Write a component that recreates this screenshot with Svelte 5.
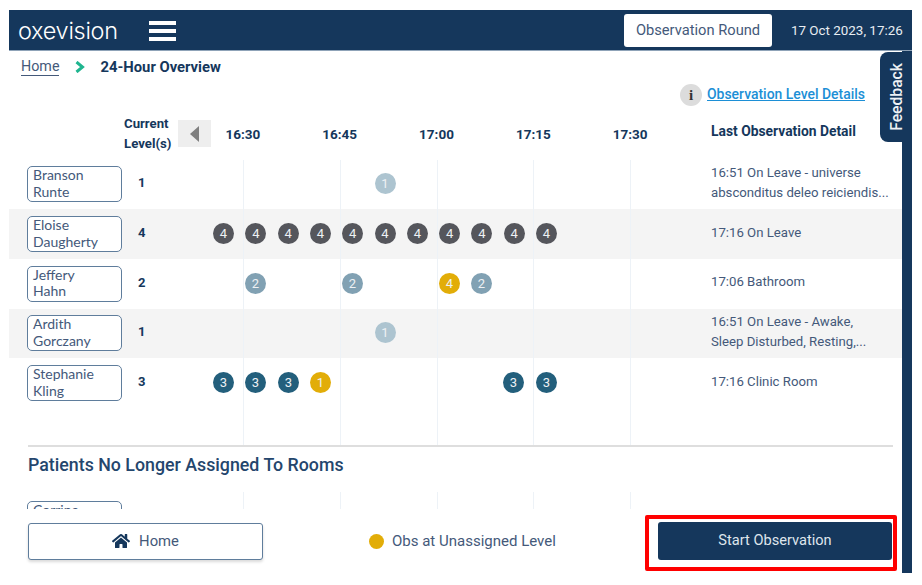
<script lang="ts">
  const times = ['16:30', '16:45', '17:00', '17:15', '17:30'];

  // x is the dot's offset in the timeline, in px
  const patients = [
    { first: 'Branson', last: 'Runte', level: 1, detail: ['16:51 On Leave - universe', 'absconditus deleo reiciendis...'],
      dots: [{ x: 161.500, l: 'l1' }] },
    { first: 'Eloise', last: 'Daugherty', level: 4, detail: ['17:16 On Leave'],
      dots: [0, 32.3, 64.6, 96.9, 129.2, 161.5, 193.8, 226.1, 258.4, 290.7, 323].map((x) => ({ x, l: 'l4' })) },
    { first: 'Jeffery', last: 'Hahn', level: 2, detail: ['17:06 Bathroom'],
      dots: [{ x: 32, l: 'l2' }, { x: 129, l: 'l2' }, { x: 226, l: 'lu', n: 4 }, { x: 258, l: 'l2' }] },
    { first: 'Ardith', last: 'Gorczany', level: 1, detail: ['16:51 On Leave - Awake,', 'Sleep Disturbed, Resting,...'],
      dots: [{ x: 161.500, l: 'l1' }] },
    { first: 'Stephanie', last: 'Kling', level: 3, detail: ['17:16 Clinic Room'],
      dots: [{ x: 0, l: 'l3' }, { x: 32, l: 'l3' }, { x: 65, l: 'l3' }, { x: 97, l: 'lu', n: 1 }, { x: 290, l: 'l3' }, { x: 323, l: 'l3' }] }
  ];

  function dotNum(dot: any) {
    return dot.n ?? Number(dot.l.slice(1));
  }
</script>

<div class="page">
  <header class="topbar">
    <div class="logo">oxevision</div>
    <div class="burger"><span></span><span></span><span></span></div>
    <div class="spacer"></div>
    <button class="round">Observation Round</button>
    <div class="clock">17 Oct 2023, 17:26</div>
  </header>

  <div class="body">
    <main class="content">
      <nav class="crumbs">
        <a href="#home">Home</a>
        <svg width="10" height="12" viewBox="0 0 10 12"><path d="M1.5 1 L7.5 6 L1.5 11" fill="none" stroke="#1fb58f" stroke-width="3"/></svg>
        <strong>24-Hour Overview</strong>
      </nav>

      <div class="legend-link">
        <span class="info">i</span>
        <a href="#levels">Observation Level Details</a>
      </div>

      <div class="scroller">
        <div class="gridlines">
          {#each times as t}<i></i>{/each}
        </div>

        <div class="head">
          <div class="current">Current<br />Level(s)</div>
          <div class="prev"><span></span></div>
          <div class="times">
            {#each times as t}<span>{t}</span>{/each}
          </div>
          <div class="last">Last Observation Detail</div>
        </div>

        {#each patients as p, i}
          <div class="row" class:shade={i % 2 === 1}>
            <div class="name">{p.first}<br />{p.last}</div>
            <div class="level">{p.level}</div>
            <div class="track">
              {#each p.dots as dot}
                <span class="dot {dot.l}" style="left: {dot.x}px">{dotNum(dot)}</span>
              {/each}
            </div>
            <div class="detail">
              {#each p.detail as line}<div>{line}</div>{/each}
            </div>
          </div>
        {/each}

        <div class="divider"></div>
        <h2>Patients No Longer Assigned To Rooms</h2>
        <div class="row cut">
          <div class="name">Corrine<br />Lang</div>
        </div>
      </div>

      <footer class="actions">
        <button class="home">
          <svg width="18" height="16" viewBox="0 0 576 512"><path fill="#15375c" d="M280.4 148.3 96 300.1V464a16 16 0 0 0 16 16l112-.3a16 16 0 0 0 15.9-16V368a16 16 0 0 1 16-16h64a16 16 0 0 1 16 16v95.6a16 16 0 0 0 16 16l112 .4a16 16 0 0 0 16-16V300L295.700 148.300a12.200 12.200 0 0 0-15.300 0zM571.600 251.500 488 182.600V44.100a12 12 0 0 0-12-12h-56a12 12 0 0 0-12 12v72.600L318.500 43a48 48 0 0 0-61 0L4.300 251.500a12 12 0 0 0-1.600 16.900l25.500 31A12 12 0 0 0 45.200 301l235.200-193.700a12.200 12.200 0 0 1 15.300 0L530.900 301a12 12 0 0 0 16.900-1.600l25.500-31a12 12 0 0 0-1.700-16.900z"/></svg>
          Home
        </button>
        <div class="unassigned"><span class="swatch"></span>Obs at Unassigned Level</div>
        <div class="start-wrap"><button class="start">Start Observation</button></div>
      </footer>
    </main>

    <aside class="feedback-rail">
      <div class="feedback"><span>Feedback</span></div>
    </aside>
  </div>
</div>

<style>
  :global(body) {
    margin: 0;
    background: #fff;
  }

  .page {
    width: 903px;
    height: 563px;
    margin: 10px 0 0 9px;
    display: flex;
    flex-direction: column;
    font-family: Roboto, sans-serif;
    color: #15375c;
    overflow: hidden;
  }

  .topbar {
    flex: none;
    height: 40px;
    background: #15375c;
    border-bottom: 1px solid #8fa3b8;
    display: flex;
    align-items: center;
    color: #fff;
  }

  .logo {
    margin-left: 9px;
    font: 300 23.500px Inter, "Open Sans", sans-serif;
    letter-spacing: -0.3px;
    width: 131px;
  }

  .burger {
    display: flex;
    flex-direction: column;
    gap: 4px;
    padding-top: 2px;
  }

  .burger span {
    display: block;
    width: 27px;
    height: 4px;
    background: #fff;
  }

  .spacer {
    flex: 1;
  }

  .round {
    width: 148px;
    height: 33px;
    background: #fff;
    border: none;
    border-radius: 3px;
    color: #44597a;
    font: 400 14.700px Roboto, sans-serif;
    padding: 0;
  }

  .clock {
    width: 121px;
    margin-left: 19px;
    font-size: 13.400px;
    color: #e8edf2;
    white-space: nowrap;
  }

  .body {
    flex: 1;
    min-height: 0;
    display: flex;
    position: relative;
  }

  .content {
    flex: 1;
    min-width: 0;
    display: flex;
    flex-direction: column;
    position: relative;
  }

  .crumbs {
    display: flex;
    align-items: center;
    gap: 16px;
    height: 16px;
    margin: 8px 0 0 12px;
    font-size: 14.300px;
  }

  .crumbs a {
    color: #44597a;
    border-bottom: 1px solid #44597a;
    text-decoration: none;
    line-height: 17px;
  }

  .crumbs strong {
    font-weight: 700;
    font-size: 14.800px;
    margin-left: -1px;
  }

  .legend-link {
    display: flex;
    align-items: center;
    justify-content: flex-end;
    gap: 5px;
    margin: 9px 47px 0 0;
    font-size: 13.950px;
    font-weight: 500;
  }

  .legend-link a {
    color: #1c8fd6;
    position: relative;
    top: -1px;
  }

  .info {
    width: 22px;
    height: 22px;
    border-radius: 50%;
    background: #dcdcdc;
    color: #333;
    font: 700 15px "Liberation Serif", serif;
    display: flex;
    align-items: center;
    justify-content: center;
  }

  .scroller {
    flex: 1;
    min-height: 0;
    position: relative;
    overflow: hidden;
  }

  .gridlines {
    position: absolute;
    left: 234px;
    top: 53.500px;
    bottom: 0;
    display: flex;
  }

  .gridlines i {
    width: 96.800px;
    box-sizing: border-box;
    border-left: 1px solid #edf2f7;
    position: relative;
    z-index: 1;
  }

  .head {
    display: flex;
    align-items: center;
    box-sizing: border-box;
    height: 53.500px;
    padding-top: 2px;
    font-size: 13.850px;
    font-weight: 700;
  }

  .current {
    margin-left: 115px;
    width: 54px;
    line-height: 20px;
    font-weight: 700;
    font-size: 13.200px;
  }

  .prev {
    width: 33px;
    height: 27px;
    background: #eeeeee;
    display: flex;
    align-items: center;
    justify-content: center;
  }

  .prev span {
    width: 0;
    height: 0;
    border-style: solid;
    border-width: 8.500px 9px 8.500px 0;
    border-color: transparent #808080 transparent transparent;
  }

  .times {
    display: flex;
    width: 484px;
    font-size: 13.500px;
    margin-left: -16.500px;
  }

  .times span {
    width: 96.800px;
    text-align: center;
  }

  .last {
    margin-left: 32.500px;
    white-space: nowrap;
    position: relative;
    top: -3px;
  }

  .row {
    display: flex;
    align-items: center;
    height: 49.700px;
    position: relative;
  }

  .row.shade {
    background: #f4f4f4;
  }

  .name {
    box-sizing: border-box;
    width: 95px;
    height: 36px;
    margin-left: 18px;
    padding: 0 5px;
    border: 1.500px solid #5f7d9c;
    border-radius: 5px;
    background: #fff;
    color: #44597a;
    font: 400 14px/16.500px Lato, sans-serif;
  }

  .level {
    width: 95px;
    padding: 0 0 3px 16px;
    box-sizing: border-box;
    font-size: 13px;
    font-weight: 700;
  }

  .track {
    position: relative;
    width: 498px;
    margin-left: -4px;
    height: 22px;
    z-index: 2;
  }

  .dot {
    position: absolute;
    top: 0;
    width: 21px;
    height: 21px;
    border-radius: 50%;
    color: #eef1f4;
    font-size: 13px;
    display: flex;
    align-items: center;
    justify-content: center;
  }

  .l1 { background: #adc4d0; }
  .l2 { background: #81a1b3; }
  .l3 { background: #235f7c; }
  .l4 { background: #55565c; }
  .lu { background: #e2ad08; }

  .detail {
    font-size: 13.200px;
    line-height: 20px;
    padding-bottom: 3px;
    color: #44597a;
    white-space: nowrap;
  }

  .divider {
    height: 2px;
    background: #dedede;
    margin: 37.500px 19px 0 19px;
    position: relative;
    z-index: 2;
  }

  h2 {
    box-sizing: border-box;
    margin: 0;
    padding: 8px 0 0 19px;
    height: 45px;
    font-size: 17.800px;
    font-weight: 500;
    line-height: 20px;
    color: #24466d;
    background: #fff;
    position: relative;
    z-index: 2;
  }

  .row.cut {
    margin-top: 8.500px;
    align-items: flex-start;
  }

  .actions {
    flex: none;
    height: 64.500px;
    display: flex;
    align-items: flex-start;
    background: #fff;
  }

  .home {
    box-sizing: border-box;
    width: 235px;
    height: 37px;
    margin: 14px 0 0 19px;
    background: #fff;
    border: 1.500px solid #5f7d9c;
    border-radius: 3px;
    box-shadow: 0 2px 3px rgba(0, 0, 0, 0.15);
    color: #44597a;
    font: 400 14.800px Roboto, sans-serif;
    display: flex;
    align-items: center;
    justify-content: center;
    gap: 9px;
  }

  .unassigned {
    margin: 23.500px 0 0 106px;
    display: flex;
    align-items: center;
    gap: 8px;
    font-size: 15px;
    color: #44597a;
    height: 18px;
    white-space: nowrap;
  }

  .swatch {
    width: 15px;
    height: 15px;
    border-radius: 50%;
    background: #e2ad08;
  }

  .start-wrap {
    margin: 6.500px 15px 0 auto;
    border: 4px solid #f00;
    border-radius: 2px;
    box-sizing: border-box;
    width: 252px;
    height: 56px;
    padding: 3px 0 0 9px;
  }

  .start {
    width: 234px;
    height: 38px;
    border: none;
    border-radius: 3px;
    background: #15375c;
    color: #dfe5ec;
    font: 400 14.600px Roboto, sans-serif;
    padding: 0 0 2px;
    display: block;
  }

  .feedback-rail {
    position: absolute;
    right: 0;
    top: 0;
    bottom: 0;
    width: 10px;
    background: #15375c;
    z-index: 5;
  }

  .feedback {
    position: absolute;
    top: 1px;
    right: 0;
    width: 32px;
    height: 90px;
    background: #15375c;
    border-radius: 8px 0 0 8px;
    display: flex;
    align-items: center;
    justify-content: center;
  }

  .feedback span {
    writing-mode: vertical-rl;
    transform: rotate(180deg);
    color: #eef1f4;
    font-size: 15.700px;
    font-weight: 500;
  }
</style>
